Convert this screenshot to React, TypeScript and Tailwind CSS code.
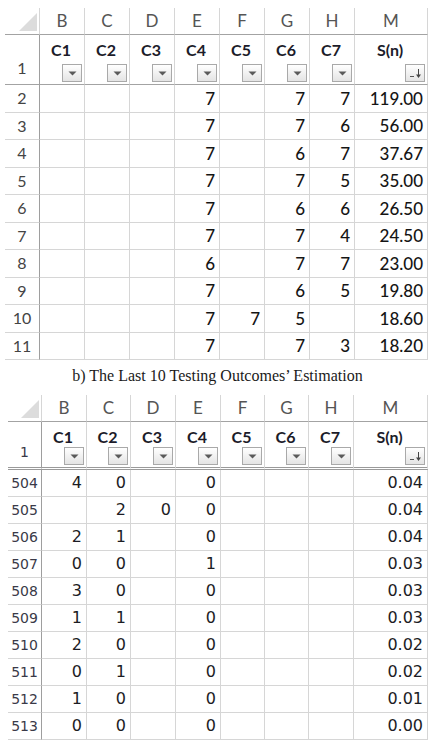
const LETTERS = ["B", "C", "D", "E", "F", "G", "H", "M"];
const HEADS = ["C1", "C2", "C3", "C4", "C5", "C6", "C7", "S(n)"];

type Row = { n: string; cells: string[] };

const TOP: Row[] = [
  { n: "2", cells: ["", "", "", "7", "", "7", "7", "119.00"] },
  { n: "3", cells: ["", "", "", "7", "", "7", "6", "56.00"] },
  { n: "4", cells: ["", "", "", "7", "", "6", "7", "37.67"] },
  { n: "5", cells: ["", "", "", "7", "", "7", "5", "35.00"] },
  { n: "6", cells: ["", "", "", "7", "", "6", "6", "26.50"] },
  { n: "7", cells: ["", "", "", "7", "", "7", "4", "24.50"] },
  { n: "8", cells: ["", "", "", "6", "", "7", "7", "23.00"] },
  { n: "9", cells: ["", "", "", "7", "", "6", "5", "19.80"] },
  { n: "10", cells: ["", "", "", "7", "7", "5", "", "18.60"] },
  { n: "11", cells: ["", "", "", "7", "", "7", "3", "18.20"] },
];

const BOTTOM: Row[] = [
  { n: "504", cells: ["4", "0", "", "0", "", "", "", "0.04"] },
  { n: "505", cells: ["", "2", "0", "0", "", "", "", "0.04"] },
  { n: "506", cells: ["2", "1", "", "0", "", "", "", "0.04"] },
  { n: "507", cells: ["0", "0", "", "1", "", "", "", "0.03"] },
  { n: "508", cells: ["3", "0", "", "0", "", "", "", "0.03"] },
  { n: "509", cells: ["1", "1", "", "0", "", "", "", "0.03"] },
  { n: "510", cells: ["2", "0", "", "0", "", "", "", "0.02"] },
  { n: "511", cells: ["0", "1", "", "0", "", "", "", "0.02"] },
  { n: "512", cells: ["1", "0", "", "0", "", "", "", "0.01"] },
  { n: "513", cells: ["0", "0", "", "0", "", "", "", "0.00"] },
];

// filter dropdown button in the header row
function FilterButton({ sorted }: { sorted?: boolean }) {
  return (
    <div className="w-[20px] h-[18px] border border-[#a9a9a9] bg-gradient-to-b from-white to-[#e4e4e4] flex items-center justify-center">
      {sorted ? (
        <svg width="14" height="12" viewBox="0 0 14 12">
          <line x1="2" y1="9.5" x2="6" y2="9.5" stroke="#555" strokeWidth="1" />
          <line x1="10.5" y1="2" x2="10.5" y2="10" stroke="#444" strokeWidth="1" />
          <polygon points="8,7.5 13,7.5 10.5,11" fill="#444" />
        </svg>
      ) : (
        <svg width="9" height="5" viewBox="0 0 9 5">
          <polygon points="0.5,0.5 8.5,0.5 4.5,4.5" fill="#5a5a5a" />
        </svg>
      )}
    </div>
  );
}

function Corner() {
  return (
    <div className="h-full border-r border-b border-r-[#d6d6d6] border-b-[#a3a3a3] flex items-end justify-end pr-[2px] pb-[3px]">
      <svg width="18" height="18" viewBox="0 0 18 18">
        <polygon points="18,0 18,18 0,18" fill="#dcdcdc" />
      </svg>
    </div>
  );
}

function Sheet({
  rows,
  grid,
  headH,
  rowH,
  numFont,
  rowNumFont,
  doubleRule,
}: {
  rows: Row[];
  grid: string;
  headH: string;
  rowH: string;
  numFont: string;
  rowNumFont: string;
  doubleRule?: boolean;
}) {
  const headBottom = doubleRule
    ? "border-b-[3px] border-double border-b-[#9a9a9a]"
    : "border-b border-b-[#a3a3a3]";

  return (
    <div className={`grid ${grid}`}>
      {/* column letters */}
      <Corner />
      {LETTERS.map((l) => (
        <div
          key={l}
          className="h-[27px] border-r border-b border-r-[#d6d6d6] border-b-[#a3a3a3] flex items-center justify-center text-[17px] text-[#555] font-['Lato',sans-serif]"
        >
          {l}
        </div>
      ))}

      {/* header row 1 */}
      <div
        className={`${headH} border-r border-r-[#9e9e9e] ${headBottom} flex items-end justify-center pb-[4px] ${rowNumFont}`}
      >
        1
      </div>
      {HEADS.map((h, i) => (
        <div
          key={h}
          className={`${headH} border-r border-r-[#d6d6d6] ${headBottom} flex flex-col items-center justify-between pt-[7px] pb-[2px] pr-[2px]`}
        >
          <span className="text-[16px] leading-[16px] font-bold text-[#1c1c2a] font-['Lato',sans-serif]">{h}</span>
          <div className="self-end">
            <FilterButton sorted={i === HEADS.length - 1} />
          </div>
        </div>
      ))}

      {/* data rows */}
      {rows.map((r) => (
        <div key={r.n} className="contents">
          <div
            className={`${rowH} border-r border-b border-r-[#9e9e9e] border-b-[#d6d6d6] flex items-center justify-center ${rowNumFont}`}
          >
            {r.n}
          </div>
          {r.cells.map((c, i) => (
            <div
              key={i}
              className={`${rowH} border-r border-b border-[#d6d6d6] flex items-center justify-end pr-[4px] ${numFont}`}
            >
              {c}
            </div>
          ))}
        </div>
      ))}
    </div>
  );
}

export default function App() {
  return (
    <div className="w-[435px] h-[749px] bg-white overflow-hidden">
      <div className="pt-[8px] pl-[5px]">
        <Sheet
          rows={TOP}
          grid="grid-cols-[35px_45px_45px_45px_45px_45px_45px_45px_73px] w-[423px]"
          headH="h-[50px]"
          rowH="h-[27.5px]"
          numFont="text-[17px] text-[#151515] font-medium font-['Lato',sans-serif]"
          rowNumFont="text-[16px] text-[#444] font-['Lato',sans-serif]"
        />
      </div>

      <div className="h-[35px] flex items-center justify-center pb-[4px] text-[16px] text-[#1a1a1a] font-['Liberation_Serif',serif]">
        b) The Last 10 Testing Outcomes’ Estimation
      </div>

      <div className="pl-[8px]">
        <Sheet
          rows={BOTTOM}
          grid="grid-cols-[34px_45px_44px_45px_45px_44px_44px_45px_74px] w-[420px]"
          headH="h-[48px]"
          rowH="h-[27px]"
          numFont="text-[16px] text-[#1c1c24] font-['DejaVu_Sans',sans-serif]"
          rowNumFont="text-[14px] text-[#3a3a48] font-['DejaVu_Sans',sans-serif]"
          doubleRule
        />
      </div>
    </div>
  );
}
